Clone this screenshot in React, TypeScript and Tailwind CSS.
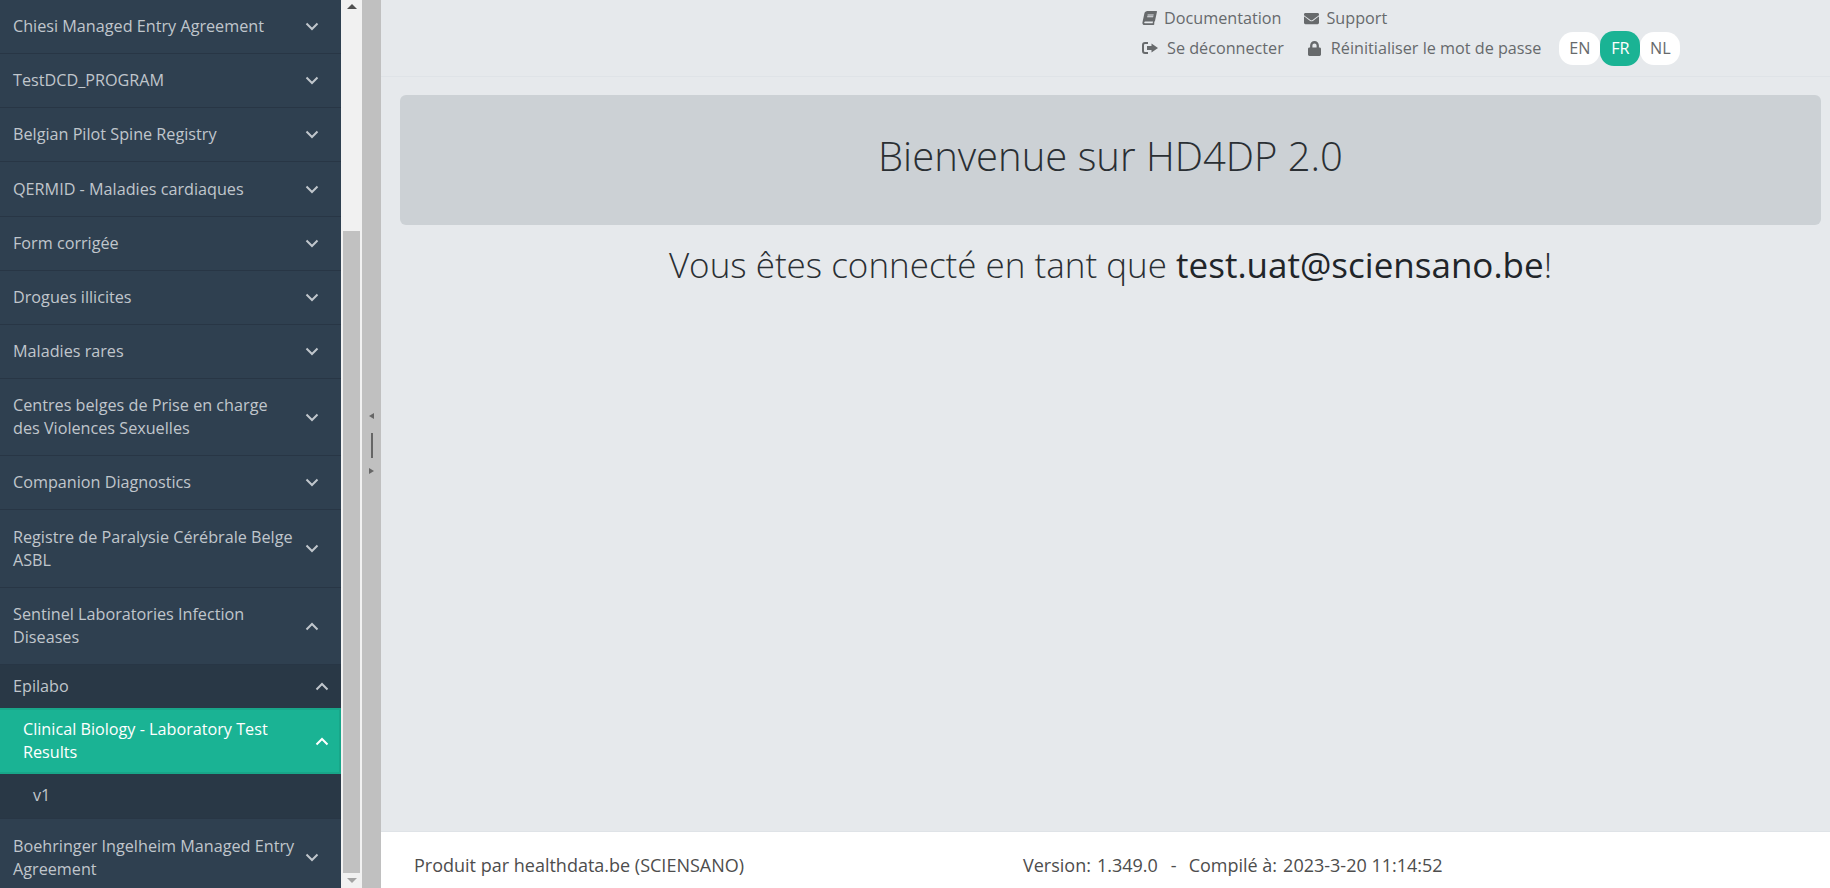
import { FaBook, FaEnvelope, FaLock } from "react-icons/fa";

type Row = { label: string; h: string; open?: boolean };

const rowsTop: Row[] = [
  { label: "Chiesi Managed Entry Agreement", h: "h-[54px]" },
  { label: "TestDCD_PROGRAM", h: "h-[54px]" },
  { label: "Belgian Pilot Spine Registry", h: "h-[54px]" },
  { label: "QERMID - Maladies cardiaques", h: "h-[55px]" },
  { label: "Form corrigée", h: "h-[54px]" },
  { label: "Drogues illicites", h: "h-[54px]" },
  { label: "Maladies rares", h: "h-[54px]" },
  { label: "Centres belges de Prise en charge des Violences Sexuelles", h: "h-[77px]" },
  { label: "Companion Diagnostics", h: "h-[54px]" },
  { label: "Registre de Paralysie Cérébrale Belge ASBL", h: "h-[78px]" },
  { label: "Sentinel Laboratories Infection Diseases", h: "h-[77px]", open: true },
];

function Chevron({ up, className }: { up?: boolean; className?: string }) {
  return (
    <svg viewBox="0 0 14 9" className={className} fill="none" stroke="currentColor" strokeWidth="2">
      <path d={up ? "M1.5 7.5L7 2l5.5 5.5" : "M1.5 1.5L7 7l5.5-5.5"} />
    </svg>
  );
}

function SignOut({ className }: { className?: string }) {
  return (
    <svg viewBox="0 0 16 14" className={className} fill="currentColor">
      <path d="M6 1H3a3 3 0 0 0-3 3v6a3 3 0 0 0 3 3h3v-2H3a1 1 0 0 1-1-1V4a1 1 0 0 1 1-1h3z" />
      <path d="M9.5 2.500L16 7l-6.500 4.500V9H5V5h4.500z" />
    </svg>
  );
}

function SideRow({ label, h, open }: Row) {
  return (
    <div className={`flex shrink-0 items-center justify-between border-b border-[#283645] pl-[13px] pr-[22px] ${h}`}>
      <span className="w-[285px] leading-[23px]">{label}</span>
      <Chevron up={open} className="h-[9px] w-[14px]" />
    </div>
  );
}

export default function App() {
  return (
    <div className="flex h-[888px] w-[1830px] overflow-hidden bg-[#e6e9ec] font-['Open_Sans',sans-serif] text-[16.2px]">
      <aside className="flex w-[341px] shrink-0 flex-col overflow-hidden bg-[#2f4050] text-[#c0c6cc]">
        <div className="shrink-0">
          {rowsTop.map((r) => (
            <SideRow key={r.label} {...r} />
          ))}
        </div>
        <div className="shrink-0 bg-[#293846]">
          <div className="flex h-[43px] items-center justify-between pl-[13px] pr-[12px]">
            <span>Epilabo</span>
            <Chevron up className="h-[9px] w-[14px]" />
          </div>
          <div className="flex h-[66px] items-center justify-between border-y-2 border-r-2 border-[#18a689] bg-[#1ab394] pl-[23px] pr-[10px] text-white">
            <span className="w-[265px] leading-[23px]">Clinical Biology - Laboratory Test Results</span>
            <Chevron up className="h-[9px] w-[14px]" />
          </div>
          <div className="flex h-[45px] items-center border-b border-[#283645] pb-[2px] pl-[33px]">v1</div>
        </div>
        <SideRow label="Boehringer Ingelheim Managed Entry Agreement" h="h-[78px]" />
      </aside>

      <div className="flex w-[21px] shrink-0 flex-col bg-[#f1f1f1]">
        <div className="flex h-[13px] items-center justify-center text-[#505050]">
          <svg viewBox="0 0 10 5" className="h-[5px] w-[10px]" fill="currentColor"><path d="M5 0l5 5H0z" /></svg>
        </div>
        <div className="mx-[2px] mt-[218px] h-[642px] bg-[#c1c1c1]" />
        <div className="flex h-[15px] items-center justify-center text-[#a3a3a3]">
          <svg viewBox="0 0 10 5" className="h-[5px] w-[10px]" fill="currentColor"><path d="M0 0h10L5 5z" /></svg>
        </div>
      </div>

      <div className="flex w-[19px] shrink-0 flex-col items-center justify-center bg-[#c0c0c0] pb-[2px] text-[#666]">
        <svg viewBox="0 0 5 6" className="h-[6px] w-[5px]" fill="currentColor"><path d="M5 0v6L0 3z" /></svg>
        <div className="mt-[14px] h-[25px] w-[2px] bg-[#666]" />
        <svg viewBox="0 0 5 6" className="mt-[10px] h-[6px] w-[5px]" fill="currentColor"><path d="M0 0l5 3-5 3z" /></svg>
      </div>

      <main className="flex min-w-0 flex-1 flex-col">
        <header className="flex h-[77px] shrink-0 items-start border-b border-[#dfe3e7] pl-[761px] pt-[6px] text-[#676a6c]">
          <div className="flex flex-col">
            <div className="flex h-[24px] items-center">
              <a className="flex items-center gap-[7px]"><FaBook className="h-[14px] w-[15px] -skew-x-12" />Documentation</a>
              <a className="ml-[23px] flex items-center gap-[7px]"><FaEnvelope className="h-[15px] w-[15px]" />Support</a>
            </div>
            <div className="mt-[6px] flex h-[24px] items-center">
              <a className="flex items-center gap-[9px]"><SignOut className="h-[14px] w-[16px]" />Se déconnecter</a>
              <a className="ml-[24px] flex items-center gap-[10px]"><FaLock className="h-[15px] w-[13px]" />Réinitialiser le mot de passe</a>
              <div className="ml-[18px] flex items-center">
                <span className="flex h-[33px] w-[41px] items-center justify-center rounded-[14px] bg-white">EN</span>
                <span className="flex h-[35px] w-[40px] items-center justify-center rounded-[14px] bg-[#1ab394] text-white">FR</span>
                <span className="flex h-[33px] w-[40px] items-center justify-center rounded-[14px] bg-white">NL</span>
              </div>
            </div>
          </div>
        </header>

        <div className="flex-1 pl-[19px] pr-[9px] pt-[18px] text-center">
          <div className="flex h-[130px] items-center justify-center rounded-[6px] bg-[#ccd1d5] pb-[8px] text-[40px] font-light text-[#2a2f33]">
            Bienvenue sur HD4DP 2.0
          </div>
          <p className="mt-[14px] text-[35px] font-light text-[#2a2f33]">
            Vous êtes connecté en tant que <span className="font-normal text-[#212529]">test.uat@sciensano.be</span>!
          </p>
        </div>

        <footer className="flex h-[57px] shrink-0 items-center border-t border-[#dfe3e7] bg-white pt-[11px] text-[18px] text-[#4d4d4d]">
          <span className="ml-[33px] w-[609px]">Produit par healthdata.be (SCIENSANO)</span>
          <span>Version:</span>
          <span className="ml-[6px]">1.349.0</span>
          <span className="ml-[13px]">-</span>
          <span className="ml-[12px]">Compilé à:</span>
          <span className="ml-[6px]">2023-3-20 11:14:52</span>
        </footer>
      </main>
    </div>
  );
}
